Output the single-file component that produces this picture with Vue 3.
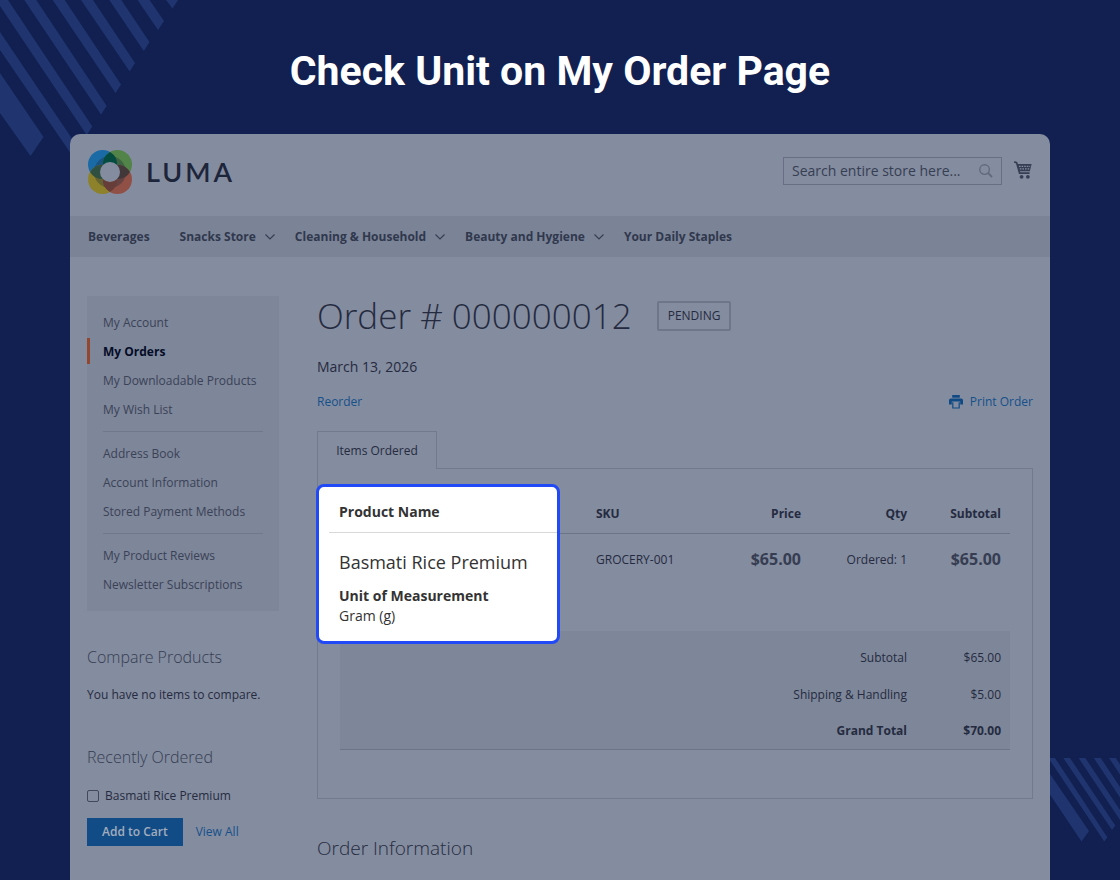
<script setup>
const navItems = [
  { label: 'Beverages', menu: false },
  { label: 'Snacks Store', menu: true },
  { label: 'Cleaning & Household', menu: true },
  { label: 'Beauty and Hygiene', menu: true },
  { label: 'Your Daily Staples', menu: false },
]

const accountGroups = [
  ['My Account', 'My Orders', 'My Downloadable Products', 'My Wish List'],
  ['Address Book', 'Account Information', 'Stored Payment Methods'],
  ['My Product Reviews', 'Newsletter Subscriptions'],
]
const current = 'My Orders'

const totals = [
  { label: 'Subtotal', value: '$65.00' },
  { label: 'Shipping & Handling', value: '$5.00' },
  { label: 'Grand Total', value: '$70.00', grand: true },
]
</script>

<template>
  <div class="page">
    <svg class="stripes stripes-top" width="180" height="160" viewBox="0 0 180 160" aria-hidden="true">
      <path d="M0 73L43.5 137L30.5 156L0 113ZM0 32L78 147.5L72.5 156L0 50ZM-4 0H8L92.3 126.5L86.7 135ZM24.3 0H36.3L106.7 106L101 114.5ZM52.7 0H64.7L121 84.5L115.5 93ZM81 0H93L135 63L129.7 71.5ZM109.3 0H121.3L149.5 42L143.8 51ZM137.6 0H149.6L164 21L158 30ZM166 0H178L172.5 8.5Z" />
    </svg>
    <svg class="stripes stripes-bottom" width="70" height="84" viewBox="1050 758 70 84" aria-hidden="true">
      <path d="M1050 774L1089 831L1081.5 841.5L1050 794.5ZM1048.4 758H1055L1107.3 837.3L1104.3 841.5ZM1063.3 758H1070L1115.3 825.5L1112 830ZM1078.6 758H1085.3L1120 810V820ZM1093.8 758H1100.7L1120 787V797.5ZM1109 758H1115.7L1120 764.5V774.5Z" />
    </svg>

    <h1 class="headline">Check Unit on My Order Page</h1>

    <div class="store">
      <header class="top">
        <a href="#" class="brand" aria-label="LUMA">
          <svg width="44" height="44" viewBox="0 0 44 44" aria-hidden="true">
            <circle cx="14.6" cy="14.6" r="14.6" fill="#1a6aa6" />
            <circle cx="29.4" cy="14.6" r="14.6" fill="#528348" />
            <circle cx="14.6" cy="29.4" r="14.6" fill="#8d822b" />
            <circle cx="29.4" cy="29.4" r="14.6" fill="#905045" />
            <circle cx="22" cy="22" r="13" fill="none" stroke="#1c2b3c" stroke-opacity=".36" stroke-width="6" />
            <path d="M22 2A14.6 14.6 0 0 1 29 16H15A14.6 14.6 0 0 1 22 2Z" fill="#044c3f" />
            <path d="M42 22A14.6 14.6 0 0 1 29 29V15A14.6 14.6 0 0 1 42 22Z" fill="#423839" />
            <path d="M22 42A14.6 14.6 0 0 1 15 28H29A14.6 14.6 0 0 1 22 42Z" fill="#673d39" />
            <path d="M2 22A14.6 14.6 0 0 1 15 15V29A14.6 14.6 0 0 1 2 22Z" fill="#2f4f41" />
            <circle cx="22" cy="22" r="10" fill="#848c9f" />
          </svg>
          <span class="wordmark">LUMA</span>
        </a>
        <div class="tools">
          <form class="search" role="search" @submit.prevent>
            <input type="text" placeholder="Search entire store here..." aria-label="Search" />
            <button type="submit" aria-label="Search">
              <svg width="14" height="14" viewBox="0 0 14 14" fill="none" stroke="#626a7e" aria-hidden="true">
                <circle cx="5.6" cy="5.6" r="4.8" stroke-width="1.4" />
                <path d="M9.2 9.2L13 13" stroke-width="1.8" />
              </svg>
            </button>
          </form>
          <a href="#" class="cart" aria-label="My Cart">
            <svg width="18" height="18" viewBox="0 0 18 18" aria-hidden="true">
              <path d="M.2 .9L2.6 1.6L5.6 12.2H15.6" fill="none" stroke="#363e53" stroke-width="1.7" />
              <path d="M3 3.1H17.6L15.8 10.2H5Z" fill="#363e53" />
              <path d="M5 5.3H16.2M5.8 7.9H15.5" stroke="#848c9f" stroke-width="1.2" stroke-dasharray="1.6 1" />
              <circle cx="7.6" cy="15.8" r="1.9" fill="#363e53" />
              <circle cx="13.9" cy="15.8" r="1.9" fill="#363e53" />
            </svg>
          </a>
        </div>
      </header>

      <nav class="nav" aria-label="Store">
        <a v-for="item in navItems" :key="item.label" href="#" :class="{ menu: item.menu }">
          {{ item.label }}
          <svg v-if="item.menu" width="10" height="6" viewBox="0 0 10 6" fill="none" stroke="#363e53" stroke-width="1.2" aria-hidden="true">
            <path d="M.5 .5L5 5L9.5 .5" />
          </svg>
        </a>
      </nav>

      <div class="columns">
        <aside class="sidebar">
          <nav class="account" aria-label="Account">
            <ul v-for="(group, i) in accountGroups" :key="i">
              <li v-for="label in group" :key="label" :class="{ current: label === current }">
                <a href="#">{{ label }}</a>
              </li>
            </ul>
          </nav>

          <section class="compare">
            <h2>Compare Products</h2>
            <p>You have no items to compare.</p>
          </section>

          <section class="recent">
            <h2>Recently Ordered</h2>
            <label><input type="checkbox" />Basmati Rice Premium</label>
            <div class="recent-actions">
              <button type="button">Add to Cart</button>
              <a href="#">View All</a>
            </div>
          </section>
        </aside>

        <main class="order">
          <div class="order-title">
            <h2>Order # 000000012</h2>
            <span class="status">PENDING</span>
          </div>
          <p class="date">March 13, 2026</p>
          <div class="actions">
            <a href="#">Reorder</a>
            <a href="#" class="print">
              <svg width="14" height="14" viewBox="0 0 14 14" fill="#0f4a85" aria-hidden="true">
                <path d="M3.2 0H10.8V2.7H3.2Z" />
                <path d="M1.8 3.5H12.2A1.8 1.8 0 0 1 14 5.3V9.5H11.2V6.5H2.8V9.5H0V5.3A1.8 1.8 0 0 1 1.8 3.5Z" />
                <path d="M3.8 7.2V13H10.2V7.2" fill="none" stroke="#0f4a85" stroke-width="1.2" />
              </svg>
              Print Order
            </a>
          </div>

          <div class="tab">Items Ordered</div>
          <div class="panel">
            <table>
              <colgroup>
                <col />
                <col class="c-sku" />
                <col class="c-price" />
                <col class="c-qty" />
                <col class="c-sub" />
              </colgroup>
              <thead>
                <tr>
                  <td></td>
                  <th scope="col" class="left">SKU</th>
                  <th scope="col">Price</th>
                  <th scope="col">Qty</th>
                  <th scope="col">Subtotal</th>
                </tr>
              </thead>
              <tbody>
                <tr>
                  <td></td>
                  <td class="left">GROCERY-001</td>
                  <td class="price">$65.00</td>
                  <td>Ordered: 1</td>
                  <td class="price">$65.00</td>
                </tr>
              </tbody>
              <tfoot>
                <tr v-for="row in totals" :key="row.label" :class="{ grand: row.grand }">
                  <th scope="row" colspan="4">{{ row.label }}</th>
                  <td>{{ row.value }}</td>
                </tr>
              </tfoot>
            </table>

            <div class="callout">
              <h3>Product Name</h3>
              <p class="product">Basmati Rice Premium</p>
              <dl>
                <dt>Unit of Measurement</dt>
                <dd>Gram (g)</dd>
              </dl>
            </div>
          </div>

          <h2 class="info">Order Information</h2>
        </main>
      </div>
    </div>
  </div>
</template>

<style>
body {
  margin: 0;
  background: #112050;
}
</style>

<style scoped>
* {
  box-sizing: border-box;
}
h1, h2, h3, p, ul, dl, dd {
  margin: 0;
  padding: 0;
}
a {
  color: #14508a;
  text-decoration: none;
}
.page {
  position: relative;
  display: flex;
  flex-direction: column;
  min-height: 100vh;
  background: #112050;
  color: #242b40;
  font: 400 12px/20px "Open Sans", "Noto Sans", sans-serif;
}
.stripes {
  position: absolute;
  fill: #20356f;
}
.stripes-top {
  top: 0;
  left: 0;
}
.stripes-bottom {
  right: 0;
  bottom: 38px;
}
.headline {
  position: relative;
  padding: 46px 0 38px;
  color: #fff;
  font: 700 41px/50px Roboto, sans-serif;
  text-align: center;
}
.store {
  position: relative;
  flex: 1;
  margin: 0 70px;
  border-radius: 10px 10px 0 0;
  background: #848c9f;
}
.top {
  display: flex;
  align-items: center;
  justify-content: space-between;
  padding: 16px 18px 22px;
}
.brand {
  display: flex;
  align-items: center;
  gap: 14px;
}
.brand svg {
  display: block;
}
.wordmark {
  color: #1d253b;
  font: 600 27px/30px Lato, sans-serif;
  letter-spacing: 3px;
}
.tools {
  display: flex;
  align-items: center;
  gap: 12px;
  padding-bottom: 2px;
}
.search {
  display: flex;
  width: 219px;
  height: 28px;
  border: 1px solid #686f84;
}
.search input {
  flex: 1;
  min-width: 0;
  padding: 0 0 0 8px;
  border: 0;
  background: none;
  color: #363e53;
  font: inherit;
  font-size: 14px;
}
.search input::placeholder {
  color: #363e53;
  opacity: 1;
}
.search button {
  display: flex;
  align-items: center;
  padding: 0 8px;
  border: 0;
  background: none;
}
.cart {
  display: block;
  padding-bottom: 2px;
}
.cart svg {
  display: block;
}
.nav {
  display: flex;
  gap: 30px;
  height: 41px;
  padding: 0 18px;
  background: #7b8397;
}
.nav a {
  display: flex;
  align-items: center;
  gap: 9px;
  color: #30384d;
  font-weight: 700;
}
.nav .menu {
  margin-right: -10px;
}
.columns {
  display: grid;
  grid-template-columns: 192px minmax(0, 1fr);
  gap: 38px;
  padding: 39px 17px 18px;
}
.account {
  padding: 12px 0;
  background: #7e8699;
}
.account ul {
  list-style: none;
}
.account ul + ul::before {
  content: "";
  display: block;
  margin: 7px 16px;
  border-top: 1px solid #70788c;
}
.account li {
  height: 29px;
  padding-left: 16px;
  line-height: 29px;
}
.account a {
  color: #3a4257;
}
.account .current {
  height: 26px;
  margin: 1px 0 2px;
  padding-left: 13px;
  border-left: 3px solid #93472f;
  line-height: 27px;
}
.account .current a {
  color: #040c28;
  font-weight: 700;
}
.sidebar h2 {
  color: #353d52;
  font-size: 16px;
  font-weight: 300;
  line-height: 24px;
}
.compare {
  padding-top: 34px;
}
.compare p {
  padding-top: 16px;
}
.recent {
  padding-top: 40px;
}
.recent label {
  display: flex;
  align-items: center;
  gap: 6px;
  padding-top: 17px;
}
.recent input {
  appearance: none;
  width: 12px;
  height: 12px;
  margin: 0;
  border: 1px solid #41485c;
  border-radius: 2px;
}
.recent-actions {
  display: flex;
  align-items: center;
  gap: 13px;
  padding-top: 12px;
}
.recent button {
  height: 28px;
  padding: 0 15px;
  border: 0;
  background: #124c87;
  color: #a3acbc;
  font: inherit;
  font-weight: 600;
}
.order-title {
  display: flex;
  align-items: center;
  gap: 25px;
  height: 40px;
}
.order-title h2 {
  font-size: 35px;
  font-weight: 300;
  line-height: 40px;
}
.status {
  padding: 3px 9px;
  border: 2px solid #6e768a;
  border-radius: 2px;
}
.date {
  padding-top: 21px;
  font-size: 14px;
}
.actions {
  display: flex;
  justify-content: space-between;
  padding-top: 15px;
}
.print {
  display: flex;
  align-items: center;
  gap: 7px;
}
.tab {
  position: relative;
  z-index: 1;
  width: 120px;
  height: 38px;
  margin: 19px 0 -1px;
  border: 1px solid #737a8e;
  border-bottom: 0;
  background: #848c9f;
  line-height: 38px;
  text-align: center;
}
.panel {
  position: relative;
  padding: 25px 22px 48px;
  border: 1px solid #737a8e;
}
table {
  width: 100%;
  border-collapse: collapse;
  table-layout: fixed;
}
.c-sku {
  width: 113px;
}
.c-price {
  width: 110px;
}
.c-qty {
  width: 106px;
}
.c-sub {
  width: 94px;
}
th, td {
  padding: 0 9px;
  text-align: right;
  vertical-align: top;
}
.left {
  text-align: left;
}
thead th, thead td {
  height: 39px;
  padding-top: 10px;
  border-bottom: 1px solid #6c7489;
  font-weight: 700;
}
tbody td {
  height: 98px;
  padding-top: 16px;
}
tbody .price {
  padding-top: 15px;
  color: #363d52;
  font-size: 16px;
  font-weight: 700;
}
tfoot {
  background: #7e8699;
}
tfoot th, tfoot td {
  height: 37px;
  padding-top: 10px;
  font-weight: 400;
}
tfoot tr:first-child > * {
  height: 44px;
  padding-top: 17px;
}
tfoot .grand > * {
  padding-top: 9px;
  border-bottom: 1px solid #6c7489;
  font-weight: 700;
}
.callout {
  position: absolute;
  top: 15px;
  left: -2px;
  width: 244px;
  padding: 15px 0 15px 20px;
  border: 3px solid #2149f5;
  border-radius: 8px;
  background: #fff;
  color: #333;
  font-size: 14px;
}
.callout h3 {
  margin-left: -10px;
  padding: 0 0 10px 10px;
  border-bottom: 1px solid #d8d8d8;
  font-size: 14px;
  font-weight: 700;
}
.callout .product {
  padding: 17px 0 12px;
  font-size: 18px;
  line-height: 24px;
}
.callout dt {
  font-weight: 700;
}
.info {
  padding-top: 35px;
  font-size: 19px;
  font-weight: 300;
  line-height: 28px;
}
</style>
